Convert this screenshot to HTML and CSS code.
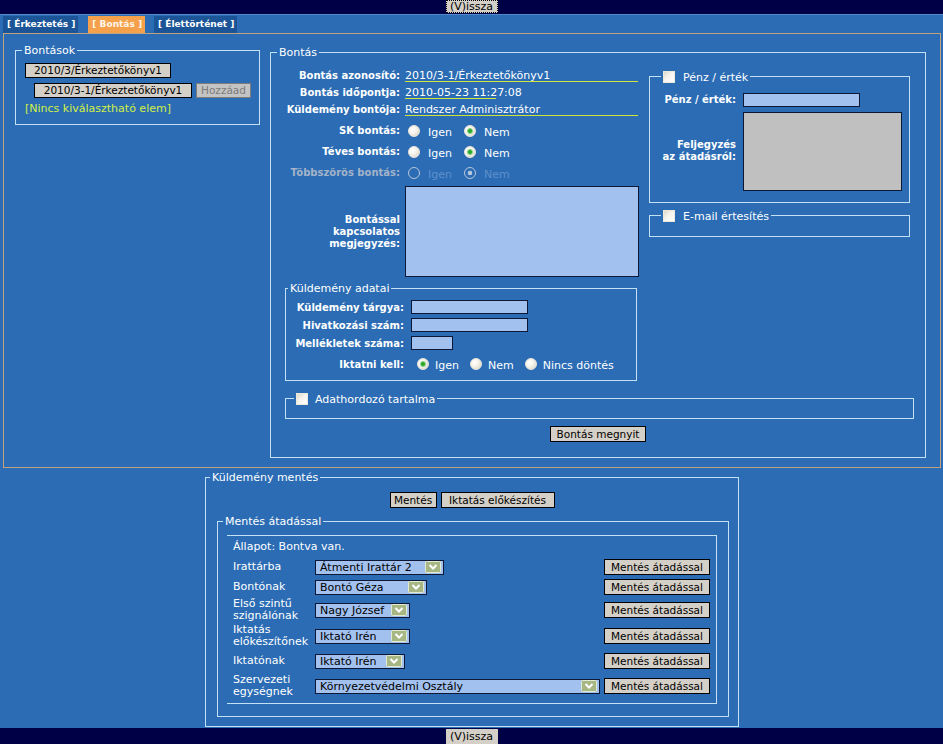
FILE: index.html
```html
<!DOCTYPE html>
<html lang="hu">
<head>
<meta charset="utf-8">
<title>Küldemény bontás</title>
<link rel="stylesheet" href="styles.css">
</head>
<body>
<header class="topbar"><button class="btn back focused" type="button">(V)issza</button></header>
<nav class="tabs">
  <span class="tab">[ Érkeztetés ]</span>
  <span class="tab active">[ Bontás ]</span>
  <span class="tab">[ Élettörténet ]</span>
</nav>
<main class="panel">
  <fieldset class="fs fs-bontasok">
    <legend>Bontások</legend>
    <div class="bontasok-body">
      <div class="brow"><button class="btn h15 w146" type="button">2010/3/Érkeztetőkönyv1</button></div>
      <div class="brow indent"><button class="btn h15 w158" type="button">2010/3-1/Érkeztetőkönyv1</button><button class="btn h15 w55" type="button" disabled>Hozzáad</button></div>
      <div class="nincs">[Nincs kiválasztható elem]</div>
    </div>
  </fieldset>

  <fieldset class="fs fs-bontas">
    <legend>Bontás</legend>
    <div class="bontas-top">
      <div class="bontas-form">
        <div class="info-grid">
          <span class="lbl">Bontás azonosító:</span><span class="val">2010/3-1/Érkeztetőkönyv1</span>
          <span class="lbl">Bontás időpontja:</span><span class="val short">2010-05-23 11:27:08</span>
          <span class="lbl">Küldemény bontója:</span><span class="val">Rendszer Adminisztrátor</span>
        </div>
        <div class="radio-grid">
          <span class="lbl">SK bontás:</span>
          <div class="radios r1">
            <label class="ropt"><input class="rb" type="radio" name="sk"><span>Igen</span></label>
            <label class="ropt"><input class="rb" type="radio" name="sk" checked><span>Nem</span></label>
          </div>
          <span class="lbl">Téves bontás:</span>
          <div class="radios r1">
            <label class="ropt"><input class="rb" type="radio" name="teves"><span>Igen</span></label>
            <label class="ropt"><input class="rb" type="radio" name="teves" checked><span>Nem</span></label>
          </div>
          <span class="lbl dis">Többszörös bontás:</span>
          <div class="radios r1 dis">
            <label class="ropt"><input class="rb" type="radio" name="tobb" disabled><span>Igen</span></label>
            <label class="ropt"><input class="rb" type="radio" name="tobb" checked disabled><span>Nem</span></label>
          </div>
        </div>
        <div class="note-grid">
          <span class="lbl multi">Bontással<br>kapcsolatos<br>megjegyzés:</span>
          <textarea class="ta ta-note"></textarea>
        </div>
        <fieldset class="fs fs-adatai">
          <legend>Küldemény adatai</legend>
          <div class="adatai-grid">
            <span class="lbl">Küldemény tárgya:</span><input class="inp w117" type="text">
            <span class="lbl">Hivatkozási szám:</span><input class="inp w117" type="text">
            <span class="lbl">Mellékletek száma:</span><input class="inp w42" type="text">
            <span class="lbl">Iktatni kell:</span>
            <div class="radios r2">
              <label class="ropt"><input class="rb" type="radio" name="ikt" checked><span>Igen</span></label>
              <label class="ropt"><input class="rb" type="radio" name="ikt"><span>Nem</span></label>
              <label class="ropt"><input class="rb" type="radio" name="ikt"><span>Nincs döntés</span></label>
            </div>
          </div>
        </fieldset>
      </div>
      <div class="bontas-right">
        <fieldset class="fs fs-penz">
          <legend class="cb-legend"><input class="cb" type="checkbox"><span>Pénz / érték</span></legend>
          <div class="penz-grid">
            <span class="lbl">Pénz / érték:</span><input class="inp grey w117" type="text">
            <span class="lbl multi">Feljegyzés<br>az átadásról:</span><textarea class="ta grey ta-penz"></textarea>
          </div>
        </fieldset>
        <fieldset class="fs fs-email">
          <legend class="cb-legend"><input class="cb" type="checkbox"><span>E-mail értesítés</span></legend>
          <div class="email-body"></div>
        </fieldset>
      </div>
    </div>
    <fieldset class="fs fs-adathordozo">
      <legend class="cb-legend"><input class="cb" type="checkbox"><span>Adathordozó tartalma</span></legend>
      <div class="adathordozo-body"></div>
    </fieldset>
    <div class="megnyit-row"><button class="btn w96" type="button">Bontás megnyit</button></div>
  </fieldset>
</main>

<section class="save-area">
  <fieldset class="fs fs-mentes">
    <legend>Küldemény mentés</legend>
    <div class="mentes-btns">
      <button class="btn w47" type="button">Mentés</button>
      <button class="btn w114" type="button">Iktatás előkészítés</button>
    </div>
    <fieldset class="fs fs-atadas">
      <legend>Mentés átadással</legend>
      <div class="atadas-table">
        <div class="allapot">Állapot: Bontva van.</div>

        <span class="rl">Irattárba</span>
        <div class="sel w129"><span>Átmenti Irattár 2</span><svg class="arr" width="16" height="12" viewBox="0 0 16 12"><rect x="0.5" y="0.5" width="15" height="11" rx="1" fill="#a7b784" stroke="#e2ead0"/><path d="M4.5 4 L8 7.5 L11.5 4" fill="none" stroke="#fff" stroke-width="2"/></svg></div>
        <button class="btn w106" type="button">Mentés átadással</button>

        <span class="rl">Bontónak</span>
        <div class="sel w112"><span>Bontó Géza</span><svg class="arr" width="16" height="12" viewBox="0 0 16 12"><rect x="0.5" y="0.5" width="15" height="11" rx="1" fill="#a7b784" stroke="#e2ead0"/><path d="M4.5 4 L8 7.5 L11.5 4" fill="none" stroke="#fff" stroke-width="2"/></svg></div>
        <button class="btn w106" type="button">Mentés átadással</button>

        <span class="rl">Első szintű<br>szignálónak</span>
        <div class="sel w95"><span>Nagy József</span><svg class="arr" width="16" height="12" viewBox="0 0 16 12"><rect x="0.5" y="0.5" width="15" height="11" rx="1" fill="#a7b784" stroke="#e2ead0"/><path d="M4.5 4 L8 7.5 L11.5 4" fill="none" stroke="#fff" stroke-width="2"/></svg></div>
        <button class="btn w106" type="button">Mentés átadással</button>

        <span class="rl">Iktatás<br>előkészítőnek</span>
        <div class="sel w95"><span>Iktató Irén</span><svg class="arr" width="16" height="12" viewBox="0 0 16 12"><rect x="0.5" y="0.5" width="15" height="11" rx="1" fill="#a7b784" stroke="#e2ead0"/><path d="M4.5 4 L8 7.5 L11.5 4" fill="none" stroke="#fff" stroke-width="2"/></svg></div>
        <button class="btn w106" type="button">Mentés átadással</button>

        <span class="rl">Iktatónak</span>
        <div class="sel w90"><span>Iktató Irén</span><svg class="arr" width="16" height="12" viewBox="0 0 16 12"><rect x="0.5" y="0.5" width="15" height="11" rx="1" fill="#a7b784" stroke="#e2ead0"/><path d="M4.5 4 L8 7.5 L11.5 4" fill="none" stroke="#fff" stroke-width="2"/></svg></div>
        <button class="btn w106" type="button">Mentés átadással</button>

        <span class="rl">Szervezeti<br>egységnek</span>
        <div class="sel w285"><span>Környezetvédelmi Osztály</span><svg class="arr" width="16" height="12" viewBox="0 0 16 12"><rect x="0.5" y="0.5" width="15" height="11" rx="1" fill="#a7b784" stroke="#e2ead0"/><path d="M4.5 4 L8 7.5 L11.5 4" fill="none" stroke="#fff" stroke-width="2"/></svg></div>
        <button class="btn w106" type="button">Mentés átadással</button>
      </div>
    </fieldset>
  </fieldset>
</section>

<footer class="bottombar"><button class="btn back" type="button">(V)issza</button></footer>
</body>
</html>
```

FILE: styles.css
```css
* { box-sizing: border-box; }
html, body { margin: 0; padding: 0; }
body {
  width: 943px;
  height: 744px;
  overflow: hidden;
  background: #2b6cb4;
  font-family: "DejaVu Sans", Verdana, sans-serif;
  font-size: 11px;
  line-height: 13px;
  color: #fff;
  display: flex;
  flex-direction: column;
}

/* bars */
.topbar {
  height: 14px;
  flex: none;
  background: #000046;
  display: flex;
  justify-content: center;
  align-items: flex-start;
}
.bottombar {
  height: 16px;
  flex: none;
  background: #000046;
  display: flex;
  justify-content: center;
  align-items: flex-start;
  padding-top: 1px;
}
.btn {
  font-family: "DejaVu Sans", Verdana, sans-serif;
  font-size: 10.5px;
  line-height: 14px;
  height: 16px;
  margin: 0;
  padding: 0;
  color: #000;
  background: #d4d0c8;
  border: 1px solid #000;
  border-radius: 0;
  white-space: nowrap;
  text-align: center;
  flex: none;
}
.btn:disabled { color: #7c7c7c; background: #c4c4c4; border-color: #7c7c7c; }
.back { width: 52px; height: 15px; border: none; line-height: 15px; font-size: 11px; }
.topbar .back { height: 13px; line-height: 13px; }
.back.focused { outline: 1px dotted #000; outline-offset: -1px; }
.h15 { height: 15px; line-height: 13px; }
.w146 { width: 146px; }
.w158 { width: 158px; }
.w55 { width: 55px; }
.w96 { width: 96px; }
.w47 { width: 47px; }
.w114 { width: 114px; }
.w106 { width: 106px; }

/* tabs */
.tabs {
  height: 19px;
  flex: none;
  border-top: 1px solid #4f89cc;
  padding: 1px 0 0 3px;
  display: flex;
  align-items: flex-start;
}
.tab {
  height: 17px;
  line-height: 17px;
  font-size: 9px;
  font-weight: bold;
  padding: 0 3px 0 4px;
  background: #1b5597;
  color: #fff;
  margin-right: 10px;
  white-space: nowrap;
}
.tab.active { background: #f5a04a; color: #fff6e8; margin-right: 9px; }

/* main panel */
.panel {
  flex: none;
  height: 435px;
  margin: 0 2px 0 3px;
  border: 1px solid #c0a27c;
  display: flex;
  align-items: flex-start;
}

/* fieldsets */
.fs {
  margin: 0;
  padding: 0;
  border: 1px solid #c2e0f6;
  min-width: 0;
}
.fs > legend {
  padding: 0 2px;
  margin-left: 6px;
  font-size: 11px;
  line-height: 13px;
  color: #fff;
  white-space: nowrap;
}
.cb-legend span { vertical-align: middle; }
.cb {
  -webkit-appearance: none;
  appearance: none;
  width: 12px;
  height: 12px;
  margin: 0 8px 0 0;
  vertical-align: middle;
  border: 1px solid #ece8da;
  background: linear-gradient(135deg, #dcd8cc 0%, #f6f4ee 45%, #ffffff 100%);
}

/* Bontások */
.fs-bontasok { width: 245px; margin: 10px 0 0 11px; }
.bontasok-body { padding: 6px 0 9px 9px; }
.brow { display: flex; gap: 4px; margin-bottom: 5px; }
.brow.indent { margin-left: 9px; margin-bottom: 4px; }
.nincs { color: #d2f044; line-height: 13px; }

/* Bontás */
.fs-bontas { width: 656px; margin: 12px 0 0 10px; }
.bontas-top { display: flex; align-items: flex-start; }
.bontas-form { width: 369px; flex: none; }
.lbl {
  font-weight: bold;
  font-size: 10px;
  line-height: 11px;
  text-align: right;
  white-space: nowrap;
  color: #fff;
}
.lbl.multi { line-height: 12px; }
.lbl.dis { color: #a3b3c9; }

.info-grid {
  display: grid;
  grid-template-columns: 129px 234px;
  column-gap: 5px;
  row-gap: 5px;
  padding-top: 11px;
  align-items: start;
}
.val {
  width: 233px;
  line-height: 11px;
  border-bottom: 1px solid #d2e43c;
  white-space: nowrap;
}
.val.short { width: 91px; }

.radio-grid {
  display: grid;
  grid-template-columns: 129px 234px;
  column-gap: 5px;
  grid-auto-rows: 21px;
  align-items: center;
  margin-top: 4px;
}
.radios { display: flex; align-items: center; }
.ropt { display: flex; align-items: center; white-space: nowrap; }
.ropt span { padding-top: 3px; }
.r1 .ropt { margin-left: 3px; }
.r1 .ropt + .ropt { margin-left: 12px; }
.r1 .ropt span { margin-left: 8px; }
.r2 .ropt { margin-left: 6px; }
.r2 .ropt + .ropt { margin-left: 11px; }
.r2 .ropt span { margin-left: 6px; }
.radios.dis .ropt span { color: #5f8fcb; }

.rb {
  -webkit-appearance: none;
  appearance: none;
  width: 12px;
  height: 12px;
  margin: 0;
  flex: none;
  border-radius: 50%;
  border: 1px solid #ece9de;
  background: radial-gradient(circle at 35% 35%, #ffffff 0, #f6f4ec 40%, #d6d0bf 100%);
}
.rb:checked {
  background:
    radial-gradient(circle at 50% 50%, #1f961f 0, #38b238 1.6px, #90d290 2.6px, rgba(255,255,255,0) 3.3px),
    radial-gradient(circle at 35% 35%, #ffffff 0, #f6f4ec 40%, #d6d0bf 100%);
}
.rb:disabled { background: transparent; border-color: #b7c6da; }
.rb:disabled:checked {
  background: radial-gradient(circle at 50% 50%, #b7c6da 0, #b7c6da 2px, rgba(0,0,0,0) 2.6px);
}

.note-grid {
  display: grid;
  grid-template-columns: 129px 234px;
  column-gap: 5px;
  align-items: center;
  margin-top: 3px;
}
.ta {
  display: block;
  margin: 0;
  padding: 2px;
  resize: none;
  font: inherit;
  border: 1px solid #0c1836;
  background: #a2c1ef;
}
.ta-note { width: 234px; height: 91px; }
.grey { background: #c0c0c0; }

.inp {
  display: block;
  margin: 0;
  padding: 0 2px;
  height: 14px;
  font: inherit;
  border: 1px solid #0c1836;
  background: #a2c1ef;
}
.w117 { width: 117px; }
.w42 { width: 42px; }

.fs-adatai { width: 352px; margin: 5px 0 0 14px; }
.fs-adatai > legend { margin-left: 2px; }
.adatai-grid {
  display: grid;
  grid-template-columns: 118px auto;
  grid-template-rows: 14px 14px 14px 20px;
  column-gap: 7px;
  row-gap: 4px;
  align-items: center;
  justify-items: start;
  padding: 5px 0 6px 0;
}
.adatai-grid .lbl { justify-self: end; }

/* right column */
.bontas-right { width: 261px; margin: 11px 0 0 9px; flex: none; }
.fs-penz > legend, .fs-email > legend { margin-left: 11px; }
.penz-grid {
  display: grid;
  grid-template-columns: 86px auto;
  column-gap: 7px;
  row-gap: 5px;
  align-items: center;
  justify-items: start;
  padding: 9px 0 11px 0;
}
.penz-grid .lbl { justify-self: end; }
.ta-penz { width: 159px; height: 79px; }
.fs-email { margin-top: 6px; }
.email-body { height: 14px; }

.fs-adathordozo { width: 629px; margin: 11px 0 0 14px; }
.fs-adathordozo > legend { margin-left: 8px; }
.fs-adathordozo .cb { margin-right: 7px; }
.adathordozo-body { height: 12px; }
.megnyit-row { display: flex; justify-content: center; margin-top: 7px; padding-bottom: 15px; }

/* Küldemény mentés */
.save-area { flex: 1; }
.fs-mentes { width: 534px; margin: 3px 0 0 205px; }
.fs-mentes > legend { margin-left: 4px; }
.mentes-btns { display: flex; justify-content: center; gap: 4px; padding-top: 8px; }
.fs-atadas { width: 512px; margin: 7px 0 9px 11px; }
.fs-atadas > legend { margin-left: 5px; }
.atadas-table {
  width: 490px;
  margin: 7px 0 12px 9px;
  border: 1px solid #c2e0f6;
  border-left: none;
  padding: 0 0 5px 6px;
  display: grid;
  grid-template-columns: 82px 289px 105px;
  grid-template-rows: 20px 18px 18px 24px 24px 22px 24px;
  row-gap: 2px;
  align-items: center;
  justify-items: start;
}
.allapot { grid-column: 1 / -1; }
.rl { line-height: 12px; white-space: nowrap; }
.sel {
  display: flex;
  align-items: center;
  justify-content: space-between;
  height: 15px;
  padding: 0 2px 0 4px;
  background: #a2c1ef;
  border: 1px solid #0c1836;
  color: #000;
  white-space: nowrap;
}
.sel span { line-height: 13px; }
.arr { flex: none; display: block; }
.w129 { width: 129px; }
.w112 { width: 112px; }
.w95 { width: 95px; }
.w90 { width: 90px; }
.w285 { width: 285px; }
```
